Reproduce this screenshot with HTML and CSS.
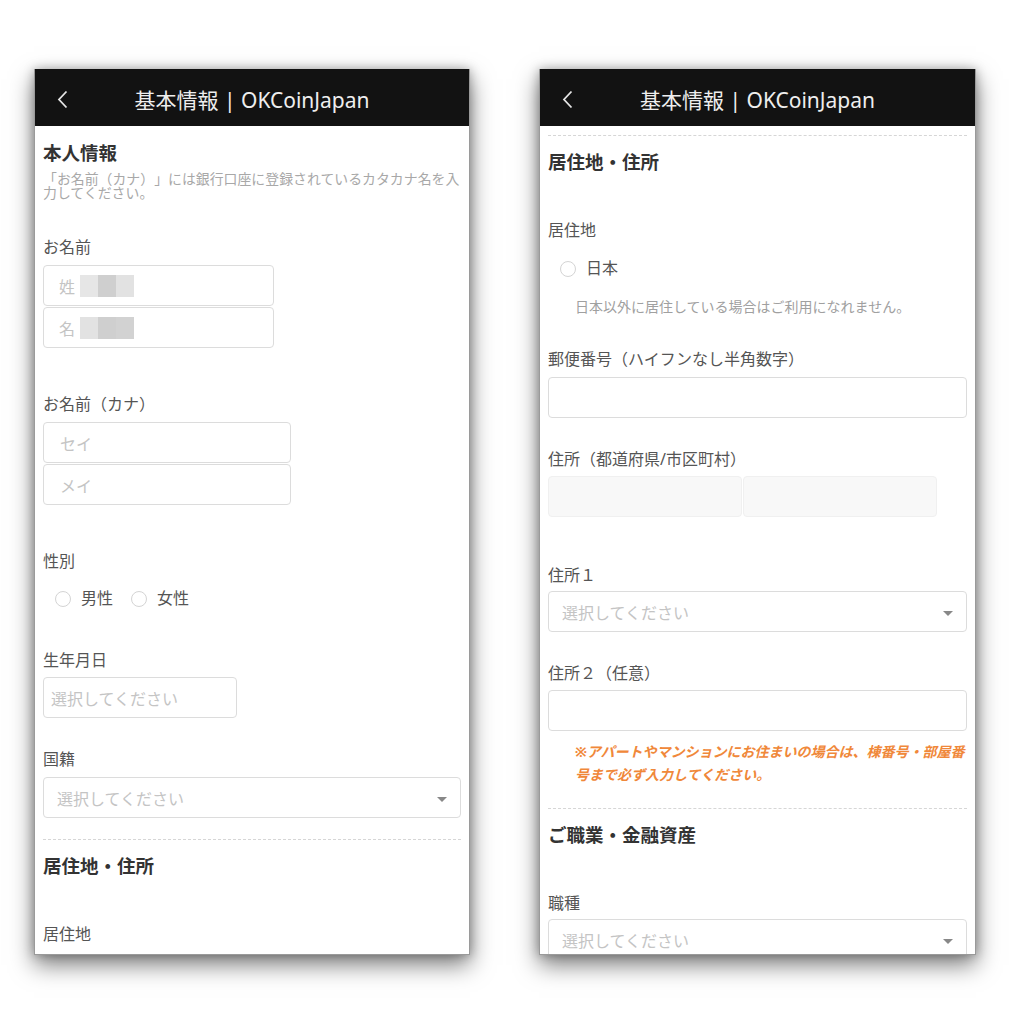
FILE: index.html
```
<!DOCTYPE html>
<html lang="ja">
<head>
    <meta charset="UTF-8">
    <meta name="viewport" content="width=device-width, initial-scale=1.0">
    <title>基本情報 | OKCoinJapan</title>
    <link rel="stylesheet" href="styles.css">
</head>
<body>
    <div class="screens">
        <!-- 画面1: 本人情報 -->
        <div class="phone">
            <div class="app-bar">
                <span class="back">
                    <svg width="11" height="19" viewBox="0 0 11 19"><polyline points="9.5,1.5 2,9.5 9.5,17.5" fill="none" stroke="#e6e6e6" stroke-width="1.8"/></svg>
                </span>
                <span class="app-title">基本情報 | OKCoinJapan</span>
                <span></span>
            </div>
            <div class="content">
                <h2 class="section-title">本人情報</h2>
                <p class="desc">「お名前（カナ）」には銀行口座に登録されているカタカナ名を入力してください。</p>

                <div class="field field--first">
                    <div class="label">お名前</div>
                    <div class="box w-name"><span class="ph">姓</span><span class="mosaic"><i class="m1"></i><i class="m2"></i><i class="m3"></i></span></div>
                    <div class="box w-name stacked"><span class="ph">名</span><span class="mosaic"><i class="m3"></i><i class="m2"></i><i class="m4"></i></span></div>
                </div>

                <div class="field field--lg">
                    <div class="label">お名前（カナ）</div>
                    <div class="box w-kana"><span class="ph">セイ</span></div>
                    <div class="box w-kana stacked"><span class="ph">メイ</span></div>
                </div>

                <div class="field field--lg">
                    <div class="label">性別</div>
                    <div class="radios">
                        <span class="radio"><i class="circle"></i>男性</span>
                        <span class="radio"><i class="circle"></i>女性</span>
                    </div>
                </div>

                <div class="field field--md">
                    <div class="label">生年月日</div>
                    <div class="box w-date tight"><span class="ph">選択してください</span></div>
                </div>

                <div class="field">
                    <div class="label">国籍</div>
                    <div class="box select"><span class="ph">選択してください</span><i class="caret"></i></div>
                </div>

                <hr class="divider">
                <h2 class="section-title">居住地・住所</h2>

                <div class="field field--lg">
                    <div class="label">居住地</div>
                </div>
            </div>
        </div>

        <!-- 画面2: 居住地・住所 -->
        <div class="phone phone--wide">
            <div class="app-bar">
                <span class="back">
                    <svg width="11" height="19" viewBox="0 0 11 19"><polyline points="9.5,1.5 2,9.5 9.5,17.5" fill="none" stroke="#e6e6e6" stroke-width="1.8"/></svg>
                </span>
                <span class="app-title">基本情報 | OKCoinJapan</span>
                <span></span>
            </div>
            <div class="content">
                <hr class="divider divider--top">
                <h2 class="section-title">居住地・住所</h2>

                <div class="field field--lg">
                    <div class="label">居住地</div>
                    <div class="radios radios--single">
                        <span class="radio"><i class="circle"></i>日本</span>
                    </div>
                    <p class="note">日本以外に居住している場合はご利用になれません。</p>
                </div>

                <div class="field field--note">
                    <div class="label">郵便番号（ハイフンなし半角数字）</div>
                    <div class="box"></div>
                </div>

                <div class="field">
                    <div class="label">住所（都道府県/市区町村）</div>
                    <div class="split">
                        <div class="box disabled"></div>
                        <div class="box disabled"></div>
                    </div>
                </div>

                <div class="field field--xl">
                    <div class="label">住所１</div>
                    <div class="box select close"><span class="ph">選択してください</span><i class="caret"></i></div>
                </div>

                <div class="field">
                    <div class="label">住所２（任意）</div>
                    <div class="box tight"></div>
                    <p class="warning">※アパートやマンションにお住まいの場合は、棟番号・部屋番号まで必ず入力してください。</p>
                </div>

                <hr class="divider">
                <h2 class="section-title">ご職業・金融資産</h2>

                <div class="field field--lg">
                    <div class="label">職種</div>
                    <div class="box select close"><span class="ph">選択してください</span><i class="caret"></i></div>
                </div>
            </div>
        </div>
    </div>
</body>
</html>
```
FILE: styles.css
```
* {
    margin: 0;
    padding: 0;
    box-sizing: border-box;
}

body {
    font-family: "Noto Sans", "Noto Sans CJK JP", sans-serif;
    background: #fff;
    color: #555;
    text-spacing-trim: space-all;
    min-height: 100vh;
}

.screens {
    display: flex;
    gap: 69px;
    padding: 69px 0 69px 34px;
}

.phone {
    width: 436px;
    height: 886px;
    background: #fff;
    border: 1px solid #9a9a9a;
    border-top: none;
    overflow: hidden;
    box-shadow: 0 10px 22px rgba(0, 0, 0, 0.5), 0 0 10px rgba(0, 0, 0, 0.28);
}

.phone--wide {
    width: 437px;
}

/* ヘッダー */
.app-bar {
    height: 57px;
    background: #121212;
    display: grid;
    grid-template-columns: 56px 1fr 56px;
    align-items: center;
    padding-top: 4px;
}

.back {
    padding-left: 22px;
    display: flex;
}

.app-title {
    text-align: center;
    color: #eee;
    font-size: 21px;
    line-height: 24px;
}

.content {
    padding: 0 8px 0 8px;
}

.section-title {
    font-size: 18.5px;
    line-height: 24px;
    font-weight: 700;
    color: #333;
    margin-top: 15px;
}

.desc {
    font-size: 13.9px;
    line-height: 14px;
    color: #a8a8a8;
    margin-top: 7px;
    margin-right: -2px;
}

/* フォーム */
.field {
    margin-top: 31px;
}

.field--first {
    margin-top: 37px;
}

.field--md {
    margin-top: 42px;
}

.field--lg {
    margin-top: 46px;
}

.field--xl {
    margin-top: 48px;
}

.field--note {
    margin-top: 35px;
}

.label {
    font-size: 16px;
    line-height: 20px;
    color: #555;
    margin-bottom: 8px;
}

.box {
    height: 41px;
    border: 1px solid #dcdcdc;
    border-radius: 4px;
    display: flex;
    align-items: center;
    padding: 0 13px;
    font-size: 16px;
    position: relative;
}

.tight {
    margin-top: -1px;
}

.close {
    margin-top: -2px;
}

.stacked {
    margin-top: 1px;
}

.w-name {
    width: 231px;
    padding-left: 15px;
}

.w-kana {
    width: 248px;
    padding-left: 16px;
}

.w-date {
    width: 194px;
    padding-left: 7px;
}

.ph {
    color: #c4c4c4;
}

.mosaic {
    display: flex;
    margin-left: 5px;
    height: 22px;
}

.mosaic i {
    width: 18px;
    height: 100%;
}

.m1 { background: #e6e6e6; }
.m2 { background: #cfcfcf; }
.m3 { background: #e2e2e2; }
.m4 { background: #d2d2d2; }

.select .caret {
    position: absolute;
    right: 13px;
    top: 19px;
    border-left: 5.5px solid transparent;
    border-right: 5.5px solid transparent;
    border-top: 5px solid #888;
}

.split {
    display: flex;
    gap: 1px;
    margin-top: -1px;
}

.split .disabled {
    width: 194px;
    background: #f8f8f8;
    border-color: #f0f0f0;
}

/* ラジオボタン */
.radios {
    display: flex;
    gap: 18px;
    padding-left: 12px;
    margin-top: 17px;
}

.radios--single {
    margin-top: 18px;
}

.radio {
    display: flex;
    align-items: center;
    gap: 10px;
    font-size: 16px;
    line-height: 20px;
    color: #555;
}

.circle {
    width: 16px;
    height: 16px;
    border: 1px solid #d4d4d4;
    border-radius: 50%;
    margin-top: 2px;
}

.note {
    font-size: 14px;
    line-height: 14px;
    color: #a0a0a0;
    padding-left: 27px;
    margin-top: 22px;
}

.warning {
    font-size: 14px;
    line-height: 23px;
    color: #f0883a;
    font-weight: 700;
    font-style: italic;
    padding-left: 27px;
    margin-top: 9px;
    margin-right: -2px;
}

.divider {
    border: none;
    border-top: 1px dashed #d6d6d6;
    margin-top: 21px;
}

.divider--top {
    margin-top: 9px;
}

.field:has(.warning) + .divider {
    margin-top: 22px;
}

.divider + .section-title {
    margin-top: 14px;
}
```
